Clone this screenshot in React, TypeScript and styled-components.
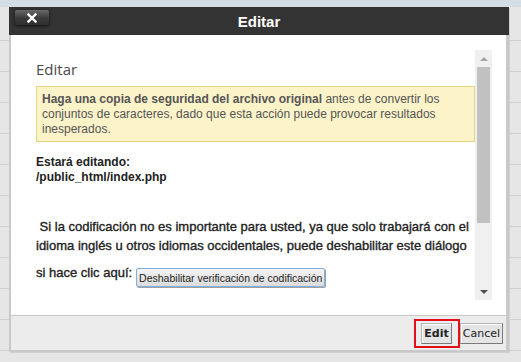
import React from "react";
import styled, { createGlobalStyle } from "styled-components";

const GlobalStyle = createGlobalStyle`
  html, body {
    margin: 0;
    padding: 0;
  }
  body {
    width: 521px;
    height: 362px;
    overflow: hidden;
    font-family: "Liberation Sans", Arial, sans-serif;
    background-color: #e3e3e3;
    background-image:
      linear-gradient(#d3dde3, #d3dde3),
      repeating-linear-gradient(#e6e6e6 0 30px, #d0d0d0 30px 31px);
    background-size: 100% 7px, 100% 100%;
    background-repeat: no-repeat, repeat;
    background-position: 0 0, 0 10px;
  }
`;

const App = () => {
  return (
    <>
      <GlobalStyle />
      <Page>
        <Dialog>
          <TitleBar>
            <CloseButton aria-label="Cerrar">
              <svg width="10" height="10" viewBox="0 0 10 10">
                <path d="M1.5 1.5 L8.5 8.5 M8.5 1.5 L1.5 8.5" stroke="#fff" strokeWidth="2.4" strokeLinecap="square" />
              </svg>
            </CloseButton>
            <Title>Editar</Title>
          </TitleBar>
          <Body>
            <ScrollArea>
              <Content>
                <Heading>Editar</Heading>
                <Warning>
                  <Strong>Haga una copia de seguridad del archivo original</Strong> antes de convertir los
                  conjuntos de caracteres, dado que esta acción puede provocar resultados inesperados.
                </Warning>
                <FileInfo>
                  Estará editando:
                  <br />
                  /public_html/index.php
                </FileInfo>
                <Notice>
                  &nbsp;Si la codificación no es importante para usted, ya que solo trabajará con el
                  <br />
                  idioma inglés u otros idiomas occidentales, puede deshabilitar este diálogo
                </Notice>
                <ClickRow>
                  <ClickLabel>si hace clic aquí:</ClickLabel>
                  <DisableButton>Deshabilitar verificación de codificación</DisableButton>
                </ClickRow>
              </Content>
              <Scrollbar>
                <ScrollArrow $dir="up" />
                <Track>
                  <Thumb />
                </Track>
                <ScrollArrow $dir="down" />
              </Scrollbar>
            </ScrollArea>
          </Body>
          <Footer>
            <Highlight>
              <FooterButton $primary>Edit</FooterButton>
            </Highlight>
            <FooterButton>Cancel</FooterButton>
          </Footer>
        </Dialog>
      </Page>
    </>
  );
};

export default App;

const Page = styled.div`
  padding: 7px 0 0 9px;
`;

const Dialog = styled.div`
  width: 500px;
  display: flex;
  flex-direction: column;
  box-shadow: 1px 1px 0 #cfcfcf;
`;

const TitleBar = styled.div`
  height: 28px;
  background: #333333;
  display: flex;
  align-items: center;
  position: relative;
`;

const CloseButton = styled.button`
  position: absolute;
  left: 6px;
  top: 3px;
  width: 34px;
  height: 15px;
  padding: 0;
  border: none;
  border-radius: 2px;
  background: linear-gradient(#6a6a6a, #3a3a3a 55%, #2e2e2e);
  box-shadow: 0 1px 3px rgba(0, 0, 0, 0.7);
  display: flex;
  align-items: center;
  justify-content: center;
`;

const Title = styled.div`
  flex: 1;
  text-align: center;
  color: #ffffff;
  font-weight: bold;
  font-size: 15px;
  padding-top: 1px;
`;

const Body = styled.div`
  height: 280px;
  background: #ffffff;
  border-left: 2px solid #c9c9c9;
  border-right: 3px solid #c9c9c9;
`;

const ScrollArea = styled.div`
  display: flex;
  margin: 15px 0 0 25px;
  height: 250px;
`;

const Content = styled.div`
  width: 439px;
  overflow: hidden;
  color: #333333;
`;

const Heading = styled.div`
  font-family: "Open Sans", "DejaVu Sans", sans-serif;
  font-size: 15px;
  line-height: 20px;
  color: #4a4a4a;
  margin-top: 9px;
`;

const Warning = styled.div`
  margin-top: 7px;
  border: 1px solid #e4d77e;
  background: #fcf3c9;
  padding: 5px 5px 4px 5px;
  font-size: 12px;
  line-height: 15px;
  color: #555555;
`;

const Strong = styled.span`
  font-weight: bold;
`;

const FileInfo = styled.div`
  margin-top: 13px;
  font-size: 12px;
  line-height: 15px;
  font-weight: bold;
  color: #222222;
`;

const Notice = styled.div`
  margin-top: 32px;
  font-size: 13px;
  line-height: 19px;
  color: #222222;
  white-space: nowrap;
  -webkit-text-stroke: 0.35px #222222;
`;

const ClickRow = styled.div`
  display: flex;
  align-items: flex-start;
  margin-top: 8px;
`;

const ClickLabel = styled.span`
  font-size: 13px;
  line-height: 19px;
  color: #222222;
  -webkit-text-stroke: 0.35px #222222;
`;

const DisableButton = styled.button`
  margin: 5px 0 0 4px;
  height: 19px;
  padding: 0 2px;
  border: 1px solid #7faee0;
  border-radius: 2px;
  background: linear-gradient(#f4f4f4, #dcdcdc);
  box-shadow: 1px 1px 0 #a0a0a0;
  font-family: "Liberation Sans", Arial, sans-serif;
  font-size: 10.5px;
  color: #222222;
`;

const Scrollbar = styled.div`
  width: 17px;
  background: #f0f0f0;
  display: flex;
  flex-direction: column;
`;

const ScrollArrow = styled.div<{ $dir: "up" | "down" }>`
  height: 17px;
  display: flex;
  align-items: center;
  justify-content: center;

  &::before {
    content: "";
    border-left: 4px solid transparent;
    border-right: 4px solid transparent;
    ${(p) =>
      p.$dir === "up"
        ? "border-bottom: 4px solid #a3a3a3;"
        : "border-top: 4px solid #505050;"}
  }
`;

const Track = styled.div`
  flex: 1;
  display: flex;
  justify-content: center;
`;

const Thumb = styled.div`
  width: 13px;
  height: 156px;
  background: #c1c1c1;
`;

const Footer = styled.div`
  height: 34px;
  background: #ececec;
  border: 2px solid #c9c9c9;
  border-top-width: 1px;
  border-right-width: 3px;
  display: flex;
  align-items: center;
  justify-content: flex-end;
  padding-right: 3px;
`;

const Highlight = styled.div`
  border: 2px solid #e3101a;
  padding: 2px 6px 2px 5px;
  display: flex;
`;

const FooterButton = styled.button<{ $primary?: boolean }>`
  margin: 0;
  height: 21px;
  padding: 0 2px;
  border: 1px solid #b5b5b5;
  border-right-color: #7a7a7a;
  border-bottom-color: #7a7a7a;
  background: #e4e4e4;
  box-shadow: inset 1px 1px 0 #ffffff;
  font-family: "DejaVu Sans", Verdana, sans-serif;
  font-size: 11px;
  font-weight: ${(p) => (p.$primary ? "bold" : "normal")};
  color: #222222;
`;
